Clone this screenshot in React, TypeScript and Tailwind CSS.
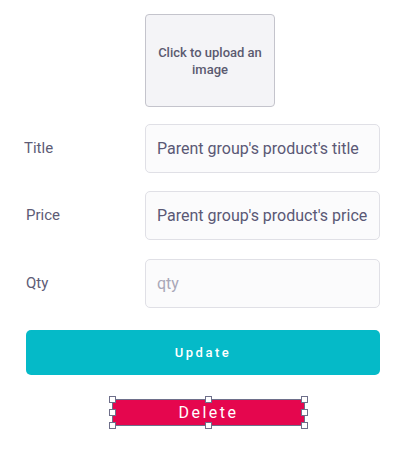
import React, { useState } from 'react'

function Handle({ className }: { className: string }) {
  return <span className={'absolute w-[7px] h-[7px] bg-white border border-[#6e6f8a] ' + className} />
}

export default function App() {
  const [title, setTitle] = useState("Parent group's product's title")
  const [price, setPrice] = useState("Parent group's product's price")
  const [qty, setQty] = useState('')

  const fields = [
    { label: 'Title', value: title, set: setTitle, ph: 'title', lx: 'pl-[24px]' },
    { label: 'Price', value: price, set: setPrice, ph: 'price', lx: 'pl-[26px]' },
    { label: 'Qty', value: qty, set: setQty, ph: 'qty', lx: 'pl-[26px]' },
  ]

  return (
    <div className="w-[417px] h-[452px] bg-white font-['Roboto',sans-serif] text-[#5b5a74] flex flex-col pt-[14px]">
      <div className="pl-[145px]">
        <button className="w-[130px] h-[93px] rounded-[4px] border border-[#c4c4cc] bg-[#f4f4f7] flex items-center justify-center px-2 text-[13px] font-medium leading-[17px] text-[#5b5a70] text-center">
          Click to upload an image
        </button>
      </div>

      <div className="mt-[17px] flex flex-col gap-[18px]">
        {fields.map((f, i) => (
          <div key={f.label} className={'flex items-center ' + (i === 2 ? 'mt-px' : '')}>
            <label className={'w-[145px] text-[15px] text-[#5d5c76] ' + f.lx}>{f.label}</label>
            <input
              className="w-[235px] h-[49px] rounded-[5px] border border-[#e0e0e6] bg-[#fbfbfc] px-[11px] text-[16px] text-[#5a5875] placeholder:text-[#a9a8b8] outline-none"
              placeholder={f.ph}
              value={f.value}
              onChange={e => f.set(e.target.value)}
            />
          </div>
        ))}
      </div>

      <div className="mt-[22px] pl-[26px]">
        <button className="w-[354px] h-[45px] rounded-[5px] bg-[#05bac8] text-white text-[13px] font-medium tracking-[2.5px]">
          Update
        </button>
      </div>

      <div className="mt-[24px] pl-[112px]">
        <div className="relative w-[193px] h-[27px]">
          <button className="w-full h-full rounded-[3px] bg-[#e5064e] border border-[#6e6f8a] text-white text-[16px] font-normal tracking-[2.5px]">
            Delete
          </button>
          <Handle className="-left-[3px] -top-[3px]" />
          <Handle className="left-[93px] -top-[3px]" />
          <Handle className="-right-[3px] -top-[3px]" />
          <Handle className="-left-[3px] top-[10px]" />
          <Handle className="-right-[3px] top-[10px]" />
          <Handle className="-left-[3px] -bottom-[3px]" />
          <Handle className="left-[93px] -bottom-[3px]" />
          <Handle className="-right-[3px] -bottom-[3px]" />
        </div>
      </div>
    </div>
  )
}
